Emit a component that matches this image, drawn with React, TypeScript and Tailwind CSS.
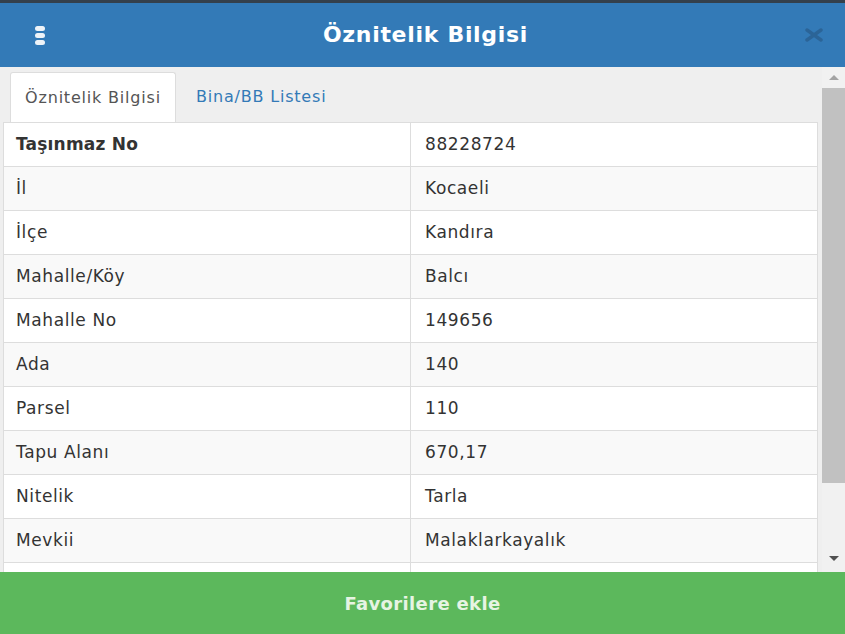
import React from "react";

const rows: [string, string][] = [
  ["Taşınmaz No", "88228724"],
  ["İl", "Kocaeli"],
  ["İlçe", "Kandıra"],
  ["Mahalle/Köy", "Balcı"],
  ["Mahalle No", "149656"],
  ["Ada", "140"],
  ["Parsel", "110"],
  ["Tapu Alanı", "670,17"],
  ["Nitelik", "Tarla"],
  ["Mevkii", "Malaklarkayalık"],
  ["", ""],
];

export default function App() {
  return (
    <div className="w-[845px] h-[634px] flex flex-col overflow-hidden bg-[#efefef] font-['DejaVu_Sans',sans-serif] text-[#333]">
      <div className="h-[3px] bg-[#34404c]" />

      {/* Başlık */}
      <header className="h-[64px] bg-[#337ab7] flex items-center justify-between px-[33px] shrink-0">
        <div className="w-[14px] flex flex-col items-center gap-[2px]">
          <span className="w-[10px] h-[5px] rounded-full bg-[#eef3f8]" />
          <span className="w-[10px] h-[5px] rounded-full bg-[#eef3f8]" />
          <span className="w-[10px] h-[5px] rounded-full bg-[#eef3f8]" />
        </div>
        <h1 className="text-white text-[22px] font-bold tracking-[0.7px] leading-none">Öznitelik Bilgisi</h1>
        <svg width="20" height="14" viewBox="0 0 20 14" className="-mr-[12px] opacity-80">
          <path d="M3 2 L17 12 M17 2 L3 12" stroke="#2a5f90" strokeWidth="3.4" strokeLinecap="round" />
        </svg>
      </header>

      {/* İçerik + kaydırma çubuğu */}
      <div className="flex flex-1 min-h-0">
        <div className="flex-1 min-w-0 pl-[3px] pr-[4px] pt-[5px] overflow-hidden">
          {/* Sekmeler */}
          <div className="flex items-end pl-[7px] h-[50px]">
            <div className="h-[50px] w-[166px] bg-white border border-[#ddd] border-b-0 rounded-t-[3px] flex items-center justify-center text-[16px] text-[#555] tracking-[0.8px]">
              Öznitelik Bilgisi
            </div>
            <div className="h-[50px] flex items-center pl-[20px] text-[16px] text-[#337ab7] tracking-[0.8px]">
              Bina/BB Listesi
            </div>
          </div>

          {/* Tablo */}
          <table className="w-full border-collapse bg-white table-fixed">
            <tbody>
              {rows.map(([k, v], i) => (
                <tr key={i} className={i % 2 === 1 ? "bg-[#f9f9f9]" : "bg-white"}>
                  <td className={`h-[44px] border border-[#ddd] pl-[12px] text-[17px] ${i === 0 ? "font-bold tracking-[0.2px]" : "tracking-[0.6px]"}`}>
                    {k}
                  </td>
                  <td className="h-[44px] border border-[#ddd] pl-[14px] text-[17px] tracking-[0.6px]">{v}</td>
                </tr>
              ))}
            </tbody>
          </table>
        </div>

        {/* Kaydırma çubuğu */}
        <div className="w-[23px] bg-[#f1f1f1] flex flex-col items-center">
          <div className="h-[21px] flex items-center justify-center">
            <span className="w-0 h-0 border-l-[5px] border-r-[5px] border-b-[5px] border-l-transparent border-r-transparent border-b-[#a3a3a3]" />
          </div>
          <div className="w-full h-[395px] bg-[#c1c1c1]" />
          <div className="flex-1" />
          <div className="h-[21px] flex items-center justify-center mb-[3px]">
            <span className="w-0 h-0 border-l-[5px] border-r-[5px] border-t-[5px] border-l-transparent border-r-transparent border-t-[#505050]" />
          </div>
        </div>
      </div>

      {/* Alt buton */}
      <button className="h-[62px] shrink-0 bg-[#5cb85c] text-[#e6f4e3] text-[18px] font-bold tracking-[0.35px]">
        Favorilere ekle
      </button>
    </div>
  );
}
